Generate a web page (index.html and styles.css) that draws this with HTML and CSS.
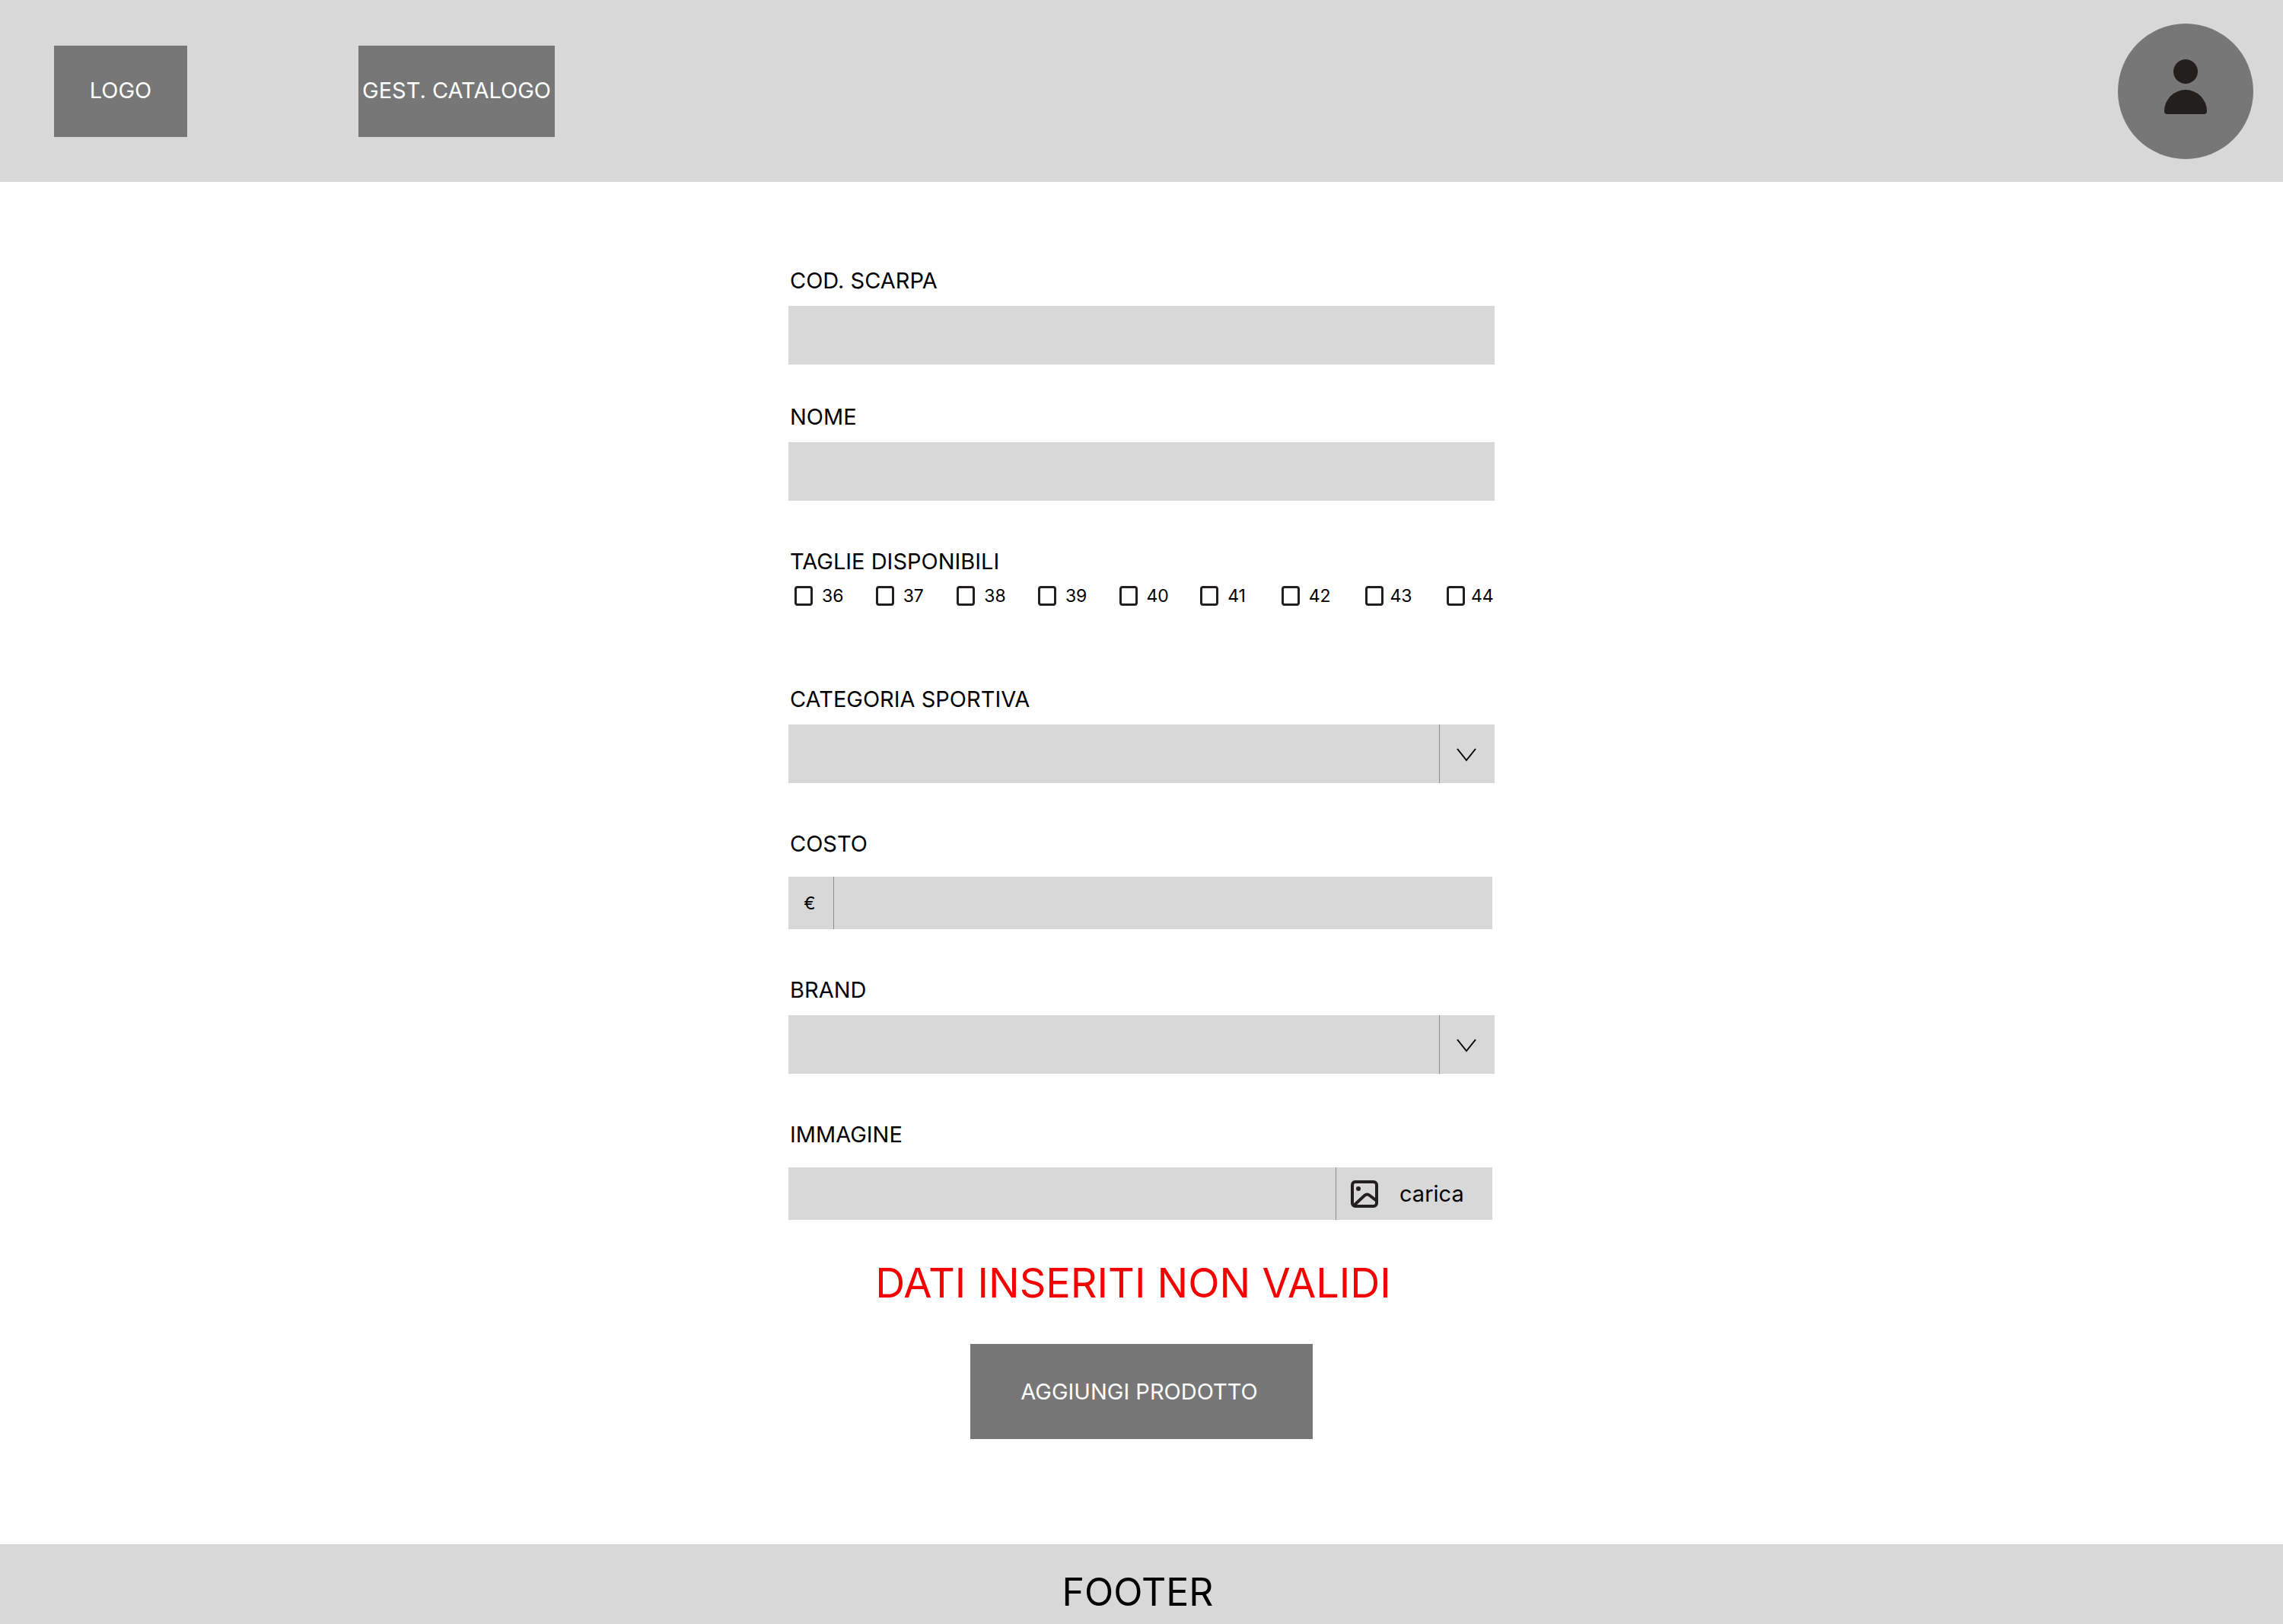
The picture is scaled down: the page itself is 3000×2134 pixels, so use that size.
FILE: index.html
```html
<!DOCTYPE html>
<html lang="it">
<head>
  <meta charset="utf-8">
  <meta name="viewport" content="width=device-width, initial-scale=1">
  <title>Gestione catalogo</title>
  <link rel="stylesheet" href="styles.css">
</head>
<body>
  <header class="site-header">
    <a class="tile tile-logo" href="#">LOGO</a>
    <nav class="site-nav">
      <a class="tile tile-nav" href="#">GEST. CATALOGO</a>
    </nav>
    <button class="account" type="button" aria-label="Account">
      <svg class="account-icon" viewBox="0 0 56 72" aria-hidden="true">
        <circle cx="28" cy="16" r="16"/>
        <path d="M0 68A28 28 0 0 1 56 68A4 4 0 0 1 52 72H4A4 4 0 0 1 0 68Z"/>
      </svg>
    </button>
  </header>

  <main class="content">
    <form class="product-form">
      <div class="field field-code">
        <label class="field-label" for="codice">COD. SCARPA</label>
        <input class="control" id="codice" type="text">
      </div>

      <div class="field">
        <label class="field-label" for="nome">NOME</label>
        <input class="control" id="nome" type="text">
      </div>

      <fieldset class="field field-sizes">
        <legend class="field-label">TAGLIE DISPONIBILI</legend>
        <div class="sizes">
          <label class="size"><input class="tick" type="checkbox"><span class="size-number">36</span></label>
          <label class="size"><input class="tick" type="checkbox"><span class="size-number">37</span></label>
          <label class="size"><input class="tick" type="checkbox"><span class="size-number">38</span></label>
          <label class="size"><input class="tick" type="checkbox"><span class="size-number">39</span></label>
          <label class="size"><input class="tick" type="checkbox"><span class="size-number">40</span></label>
          <label class="size"><input class="tick" type="checkbox"><span class="size-number">41</span></label>
          <label class="size"><input class="tick" type="checkbox"><span class="size-number">42</span></label>
          <label class="size size-tight"><input class="tick" type="checkbox"><span class="size-number">43</span></label>
          <label class="size size-tight"><input class="tick" type="checkbox"><span class="size-number">44</span></label>
        </div>
      </fieldset>

      <div class="field">
        <label class="field-label" for="categoria">CATEGORIA SPORTIVA</label>
        <div class="select">
          <select class="control" id="categoria"><option></option></select>
          <span class="select-arrow">
            <svg class="chevron" viewBox="0 0 26 18" aria-hidden="true"><path d="M1 1L13 16L25 1"/></svg>
          </span>
        </div>
      </div>

      <div class="field field-group">
        <label class="field-label" for="costo">COSTO</label>
        <div class="group">
          <span class="currency">€</span>
          <input class="control" id="costo" type="text" inputmode="decimal">
        </div>
      </div>

      <div class="field">
        <label class="field-label" for="brand">BRAND</label>
        <div class="select">
          <select class="control" id="brand"><option></option></select>
          <span class="select-arrow">
            <svg class="chevron" viewBox="0 0 26 18" aria-hidden="true"><path d="M1 1L13 16L25 1"/></svg>
          </span>
        </div>
      </div>

      <div class="field field-group">
        <label class="field-label" for="immagine">IMMAGINE</label>
        <div class="group">
          <input class="control" id="immagine" type="text">
          <button class="upload" type="button">
            <svg class="upload-icon" viewBox="0 0 36 36" aria-hidden="true">
              <rect x="2" y="2" width="32" height="32" rx="4"/>
              <path d="M4 33L18 20Q21.500 17 25 20L34 27"/>
              <circle cx="10" cy="11" r="3"/>
            </svg>
            carica
          </button>
        </div>
      </div>

      <p class="error" role="alert">DATI INSERITI NON VALIDI</p>
      <button class="submit" type="submit">AGGIUNGI PRODOTTO</button>
    </form>
  </main>

  <footer class="site-footer">FOOTER</footer>
</body>
</html>
```

FILE: styles.css
```css
:root {
  --light: #d8d8d8;
  --dark: #777;
  --line: #8c8c8c;
  --ink: #231f1e;
}

* {
  box-sizing: border-box;
}

body {
  display: flex;
  flex-direction: column;
  min-height: 100vh;
  margin: 0;
  background: #fff;
  color: #000;
  font-family: Inter, "Liberation Sans", sans-serif;
  font-size: 29px;
  line-height: 36px;
}

button,
input,
select {
  margin: 0;
  padding: 0;
  border: 0;
  border-radius: 0;
  color: inherit;
  font: inherit;
}

/* Header */

.site-header {
  display: flex;
  align-items: center;
  padding: 31px 39px 30px 71px;
  background: var(--light);
}

.site-nav {
  flex: 1;
  display: flex;
  padding-left: 225px;
}

.tile {
  display: flex;
  align-items: center;
  justify-content: center;
  height: 120px;
  padding-bottom: 3px;
  background: var(--dark);
  color: #fff;
  text-decoration: none;
  white-space: nowrap;
}

.tile-logo {
  width: 175px;
}

.tile-nav {
  width: 258px;
}

.account {
  display: flex;
  align-items: center;
  justify-content: center;
  width: 178px;
  height: 178px;
  padding-bottom: 12px;
  border-radius: 50%;
  background: var(--dark);
}

.account-icon {
  width: 56px;
  height: 72px;
  fill: var(--ink);
}

/* Form */

.content {
  flex: 1;
  padding: 112px 24px 138px;
}

.product-form {
  display: flex;
  flex-direction: column;
  max-width: 928px;
  margin: 0 auto;
}

.field {
  display: flex;
  flex-direction: column;
  gap: 15px;
  min-width: 0;
  margin: 0 0 62px;
  padding: 0;
  border: 0;
}

.field-code {
  margin-bottom: 51px;
}

.field-group {
  gap: 25px;
  max-width: 925px;
}

.field-label {
  padding: 0 2px;
}

.control {
  width: 100%;
  height: 77px;
  padding: 0 20px;
  background: var(--light);
}

.field-sizes {
  display: block;
  margin-bottom: 105px;
}

.sizes {
  display: flex;
  flex-wrap: wrap;
  justify-content: space-between;
  padding: 14px 3px 0 8px;
}

.size {
  display: flex;
  align-items: center;
  justify-content: flex-end;
  gap: 12px;
  width: 64px;
  font-size: 23px;
  line-height: 26px;
}

.size-tight {
  gap: 8px;
}

.size-number {
  width: 28px;
}

.tick {
  flex: none;
  appearance: none;
  width: 24px;
  height: 26px;
  border: 3px solid var(--ink);
  border-radius: 4px;
}

.tick:checked {
  background: var(--ink);
}

.select {
  display: grid;
}

.select > * {
  grid-area: 1 / 1;
}

.select .control {
  appearance: none;
}

.select-arrow {
  display: flex;
  align-items: center;
  justify-content: center;
  justify-self: end;
  width: 73px;
  padding: 3px 2px 0 0;
  border-left: 1px solid var(--line);
  pointer-events: none;
}

.chevron {
  width: 26px;
  height: 18px;
  fill: none;
  stroke: #000;
  stroke-width: 2;
}

.group {
  display: flex;
  height: 69px;
  background: var(--light);
}

.group .control {
  flex: 1;
  min-width: 0;
  height: 100%;
}

.currency {
  display: flex;
  align-items: center;
  justify-content: center;
  width: 60px;
  padding-right: 3px;
  border-right: 1px solid var(--line);
  font-size: 23px;
}

.upload {
  display: flex;
  align-items: center;
  gap: 28px;
  width: 206px;
  padding-left: 19px;
  border-left: 1px solid var(--line);
  background: var(--light);
}

.upload-icon {
  width: 36px;
  height: 36px;
  fill: none;
  stroke: var(--ink);
  stroke-width: 4;
}

.upload-icon circle {
  fill: var(--ink);
  stroke: none;
}

.error {
  margin: -11px 0 48px;
  padding-right: 22px;
  color: #f40000;
  font-size: 54px;
  line-height: 64px;
  text-align: center;
}

.submit {
  align-self: center;
  width: 450px;
  height: 125px;
  padding-right: 6px;
  background: var(--dark);
  color: #fff;
}

/* Footer */

.site-footer {
  padding: 33px 10px 13px 0;
  background: var(--light);
  font-size: 50px;
  line-height: 60px;
  text-align: center;
}
```
